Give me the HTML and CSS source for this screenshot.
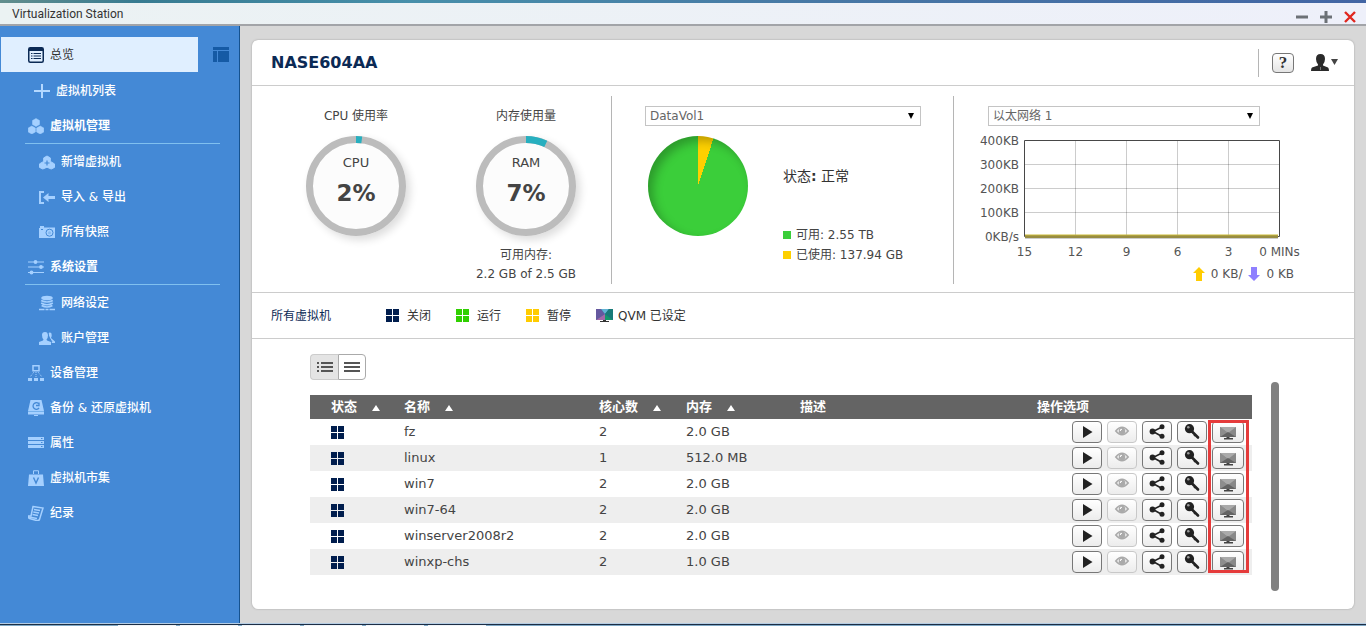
FILE: index.html
```html
<!DOCTYPE html>
<html lang="zh-CN">
<head>
<meta charset="utf-8">
<title>Virtualization Station</title>
<link rel="stylesheet" href="styles.css">
</head>
<body>
<svg class="sprite" aria-hidden="true">
  <symbol id="win" viewBox="0 0 13 13"><path d="M0 0h6v6H0zM7 0h6v6H7zM0 7h6v6H0zM7 7h6v6H7z" fill="currentColor"/></symbol>
  <symbol id="play" viewBox="0 0 16 16"><path d="M4 2l9.500 6L4 14z" fill="#222"/></symbol>
  <symbol id="eye" viewBox="0 0 16 16"><path d="M1.800 7Q8-.5 14.200 7 8 14.500 1.800 7z" fill="none" stroke="#aaa" stroke-width="1.600"/><circle cx="8" cy="7" r="3.300" fill="#aaa"/><path d="M6.300 7Q6.300 5.200 8 5.200" fill="none" stroke="#fff" stroke-width="1.100"/></symbol>
  <symbol id="share" viewBox="0 0 16 16"><path d="M13 3L4 7.500l9 5" fill="none" stroke="#222" stroke-width="1.600"/><circle cx="3.500" cy="7.500" r="2.900" fill="#222"/><circle cx="13" cy="2.700" r="2.500" fill="#222"/><circle cx="13" cy="12.300" r="2.500" fill="#222"/></symbol>
  <symbol id="key" viewBox="0 0 16 16"><path d="M7 6.500l7 7" stroke="#222" stroke-width="2.600" stroke-linecap="round"/><path d="M10 12l1.500-1.500" stroke="#222" stroke-width="1.500"/><circle cx="5.500" cy="4.700" r="4.600" fill="#222"/><circle cx="4.300" cy="3.200" r="1.300" fill="#999"/></symbol>
  <symbol id="screen" viewBox="0 0 16 16"><path d="M0 3h16v10H0z" fill="#888"/><path d="M0 3l8 6 8-6z" fill="#aaa"/><path d="M0 3l8 6-8 4z" fill="#8d8d8d"/><path d="M0 13l8-5 8 5z" fill="#636363"/><path d="M6.500 13h3v1H13v1.500H4V14h2.500z" fill="#444"/></symbol>
</svg>

<div class="desktop-top"></div>
<header class="titlebar">
  <span class="titlebar-name">Virtualization Station</span>
  <div class="window-tools">
    <button aria-label="最小化"><svg width="12" height="12"><path d="M0 6h12" stroke="#6c7176" stroke-width="3"/></svg></button>
    <button aria-label="最大化"><svg width="12" height="12"><path d="M0 6h12M6 0v12" stroke="#6c7176" stroke-width="3"/></svg></button>
    <button aria-label="关闭"><svg width="12" height="12"><path d="M1 1l10 10M11 1L1 11" stroke="#e0271f" stroke-width="2.400"/></svg></button>
  </div>
</header>

<div class="workspace">
  <aside class="sidebar">
    <button class="collapse" aria-label="收起菜单"><svg width="16" height="15"><path d="M0 0h16v3H0zM0 4h4v11H0zM5 4h11v11H5z" fill="#155aa5"/></svg></button>
    <nav>
      <a class="nav-item active" href="#"><svg width="16" height="16"><rect x=".75" y=".75" width="14.500" height="14.500" rx="1.500" fill="none" stroke="#0b2a55" stroke-width="1.500"/><path d="M1 1h14v3H1z" fill="#0b2a55"/><path d="M3 6.500h1.500M5.500 6.500h7.500M3 9h1.500M5.500 9h7.500M3 11.500h1.500M5.500 11.500h7.500" stroke="#0b2a55" stroke-width="1.200"/></svg>总览</a>
      <a class="nav-item plus" href="#"><svg width="16" height="16"><path d="M0 8h16M8 1v14" stroke="#b3d8ff" stroke-width="2"/></svg>虚拟机列表</a>
      <a class="nav-item section" href="#"><svg width="16" height="16"><path d="M8 .5l3.500 2v4L8 8.500l-3.500-2v-4zM3.800 8l3.600 2v4l-3.600 2-3.600-2v-4zM12.200 8l3.600 2v4l-3.600 2-3.600-2v-4z" fill="#a5d0ff" stroke="#a5d0ff" stroke-width=".5" stroke-linejoin="round"/></svg>虚拟机管理</a>
      <a class="nav-item sub" href="#"><svg width="16" height="16"><path d="M8 2l3.300 1.900v3.500l4.200 2.500v3.500L12.200 15 8 13.200 3.800 15 .5 13.400V9.900l4.200-2.500V3.900z" fill="#a5d0ff" stroke="#a5d0ff" stroke-linejoin="round"/><path d="M8 6.500v5M5.500 9h5" stroke="#4489d6" stroke-width="1.200"/></svg>新增虚拟机</a>
      <a class="nav-item sub" href="#"><svg width="16" height="16"><path d="M5 3H1v11h4" fill="none" stroke="#a5d0ff" stroke-width="2"/><path d="M4 8.500L9.500 4v3H16v3H9.500v3z" fill="#a5d0ff"/></svg>导入 &amp; 导出</a>
      <a class="nav-item sub" href="#"><svg width="16" height="16"><path d="M1 2h4v1.500h11V14H0V4h1z" fill="#a5d0ff"/><circle cx="10.500" cy="8.700" r="3.500" fill="none" stroke="#4489d6"/><circle cx="10.500" cy="8.700" r="1.500" fill="#85b9ef"/><path d="M2 5h2v1H2z" fill="#4489d6"/></svg>所有快照</a>
      <a class="nav-item section" href="#"><svg width="16" height="16"><path d="M0 3h16M0 8h16M0 13.500h16" stroke="#a5d0ff"/><circle cx="7.500" cy="3" r="1.900" fill="#a5d0ff"/><circle cx="13" cy="8" r="1.900" fill="#a5d0ff"/><circle cx="3.500" cy="13.500" r="1.900" fill="#a5d0ff"/></svg>系统设置</a>
      <a class="nav-item sub" href="#"><svg width="16" height="16"><ellipse cx="8" cy="3" rx="5.800" ry="2.300" fill="#a5d0ff"/><path d="M2.200 5.500q5.800 3 11.600 0M2.200 8q5.800 3.500 11.600 0M2.600 10.500q5.400 3 10.800 0" fill="none" stroke="#a5d0ff" stroke-width="1.700"/><path d="M0 14.500h5.500M10.500 14.500H16M6.500 14.500h3" stroke="#a5d0ff" stroke-width="1.500"/></svg>网络设定</a>
      <a class="nav-item sub" href="#"><svg width="16" height="16"><path d="M9 3.500q2-2 3.500 0 .7 3-.5 4.500l4 3.500v1.500h-3z" fill="#a5d0ff"/><path d="M3 5q0-3 3-3t3 3q0 3-1.500 4.500l.5 1 4 1.500V15H0v-3l4-1.500.5-1Q3 8 3 5z" fill="#a5d0ff"/><path d="M9 2l.8 5L13 12" fill="none" stroke="#4489d6"/></svg>账户管理</a>
      <a class="nav-item" href="#"><svg width="16" height="16"><path d="M5 .75h6v5H5z" fill="none" stroke="#a5d0ff" stroke-width="1.500"/><path d="M8 7v5M6 7l-4 5M10 7l4 5" stroke="#a5d0ff" stroke-dasharray="1 1"/><path d="M0 13h4v3H0zM6 13h4v3H6zM12 13h4v3h-4z" fill="#a5d0ff"/></svg>设备管理</a>
      <a class="nav-item" href="#"><svg width="16" height="16"><path d="M2.500 0h11L16 11v3.500H0V11z" fill="#a5d0ff"/><path d="M10.500 3.500A3.300 3.300 0 1 0 11 8M8 5.500h3V2.500" fill="none" stroke="#4489d6" stroke-width="1.300"/><path d="M0 11.500h16" stroke="#75b1ed"/><path d="M6 15h4v1H6z" fill="#a5d0ff"/></svg>备份 &amp; 还原虚拟机</a>
      <a class="nav-item" href="#"><svg width="16" height="16"><path d="M0 2h16v3H0zM0 6h16v3H0zM0 10h16v3H0z" fill="#a5d0ff"/><path d="M13 3.500h1.500M13 7.500h1.500M13 11.500h1.500" stroke="#4489d6"/></svg>属性</a>
      <a class="nav-item" href="#"><svg width="16" height="16"><path d="M5.500 4V.75h5V4" fill="none" stroke="#a5d0ff"/><path d="M1 4.500h14l1 11.500H0z" fill="#a5d0ff"/><path d="M5.500 7.500L8 13l2.500-5.500" fill="none" stroke="#4489d6" stroke-width="1.400"/></svg>虚拟机市集</a>
      <a class="nav-item" href="#"><svg width="16" height="16"><path d="M5 1.500l10 1.500-3.500 11.500q-1 1.500-3 1L1.500 13.500Q0 13 .5 11L3 11z" fill="none" stroke="#a5d0ff" stroke-width="1.500"/><path d="M6 4.500l6 1M5.300 7l5.700 1M4.500 9.500l5.500 1M1 12l8 1.500" stroke="#a5d0ff" stroke-width="1.400"/></svg>纪录</a>
    </nav>
  </aside>

  <main class="panel">
    <div class="panel-head">
      <h1>NASE604AA</h1>
      <div class="head-tools">
        <button class="help" aria-label="帮助">?</button>
        <button class="user" aria-label="用户"><svg width="28" height="18"><path d="M5 5q0-5 4.500-5T14 5q0 3-2 5.500v1l5 2q1 .5 1 3.500H0q0-3 1-3.500l6-2v-1Q5 8 5 5z" fill="#2a2a2a"/><path d="M9 13h1v3H9z" fill="#777"/><path d="M20 5h7l-3.500 6z" fill="#444"/></svg></button>
      </div>
    </div>

    <section class="stats">
      <div class="gauges">
        <div class="gauge">
          <span>CPU 使用率</span>
          <div class="ring"><svg viewBox="0 0 100 100"><circle cx="50" cy="50" r="46.500" class="track"/><circle cx="50" cy="50" r="46.500" pathLength="100" class="used cpu"/></svg><span>CPU</span><strong>2%</strong></div>
        </div>
        <div class="gauge">
          <span>内存使用量</span>
          <div class="ring"><svg viewBox="0 0 100 100"><circle cx="50" cy="50" r="46.500" class="track"/><circle cx="50" cy="50" r="46.500" pathLength="100" class="used ram"/></svg><span>RAM</span><strong>7%</strong></div>
          <div class="free">可用内存:<br>2.2 GB of 2.5 GB</div>
        </div>
      </div>

      <div class="disk">
        <div class="picker"><select aria-label="存储空间"><option>DataVol1</option></select><svg width="8" height="8"><path d="M1 1h6L4 7z"/></svg></div>
        <div class="disk-body">
          <div class="pie"></div>
          <div class="disk-info">
            <p class="health">状态<b>:</b> 正常</p>
            <ul>
              <li class="avail">可用: 2.55 TB</li>
              <li class="taken">已使用: 137.94 GB</li>
            </ul>
          </div>
        </div>
      </div>

      <div class="net">
        <div class="picker"><select aria-label="网络"><option>以太网络 1</option></select><svg width="8" height="8"><path d="M1 1h6L4 7z"/></svg></div>
        <div class="chart">
          <div class="y-axis"><span>400KB</span><span>300KB</span><span>200KB</span><span>100KB</span><span>0KB/s</span></div>
          <svg class="plot" width="256" height="100"><path d="M51.500 0v96M102.500 0v96M153.500 0v96M204.500 0v96M0 24.500h256M0 48.500h256M0 72.500h256" stroke="#000" stroke-opacity=".2"/><path d="M.5.5h255v96H.5z" fill="none" stroke="#484848"/><path d="M1 98.500h253" stroke="#ccc"/><path d="M1 96.500h253" stroke="#978c42" stroke-width="3"/><path d="M1 95h253" stroke="#c9b837"/></svg>
        </div>
        <div class="x-axis"><span>15</span><span>12</span><span>9</span><span>6</span><span>3</span><span>0 MINs</span></div>
        <div class="traffic"><svg width="12" height="14"><path d="M6 0l6 6H9v8H3V6H0z" fill="#fc0"/></svg><span>0 KB/</span><svg width="12" height="14"><path d="M6 14l6-6H9V0H3v8H0z" fill="#8f80ff"/></svg><span>0 KB</span></div>
      </div>
    </section>

    <div class="legend">
      <h2>所有虚拟机</h2>
      <span class="key-off"><svg class="win"><use href="#win"/></svg>关闭</span>
      <span class="key-on"><svg class="win"><use href="#win"/></svg>运行</span>
      <span class="key-pause"><svg class="win"><use href="#win"/></svg>暂停</span>
      <span class="key-qvm"><svg width="17" height="13"><path d="M0 0h17v11H0z" fill="#286b9c"/><path d="M0 0h5l4 5-9 6z" fill="#65589f"/><path d="M0 11l9-6v6z" fill="#a468a8"/><path d="M5 0h8L9 5z" fill="#62b4d4"/><path d="M17 11H9V5z" fill="#14986b"/><path d="M13 0h4v11L9 5z" fill="#187a78"/><path d="M7 11h3v1h3v1H4v-1h3z" fill="#333"/></svg>QVM 已设定</span>
    </div>

    <section class="list">
      <div class="list-main">
        <div class="view-toggle">
          <button class="on" aria-label="详细列表"><svg width="16" height="10"><path d="M0 1h2M4 1h12M0 5h2M4 5h12M0 9h2M4 9h12" stroke="#555" stroke-width="2"/></svg></button>
          <button aria-label="简单列表"><svg width="16" height="10"><path d="M0 1h16M0 5h16M0 9h16" stroke="#555" stroke-width="2"/></svg></button>
        </div>
        <div class="table-wrap">
          <table>
            <colgroup><col class="c-state"><col class="c-name"><col class="c-core"><col class="c-mem"><col><col class="c-act"></colgroup>
            <thead><tr><th class="state">状态<i class="sort"></i></th><th>名称<i class="sort"></i></th><th>核心数<i class="sort"></i></th><th>内存<i class="sort"></i></th><th>描述</th><th>操作选项</th></tr></thead>
            <tbody>
              <tr><td class="state"><svg class="win"><use href="#win"/></svg></td><td>fz</td><td>2</td><td>2.0 GB</td><td></td><td><div class="actions"><button aria-label="启动"><svg><use href="#play"/></svg></button><button aria-label="查看" disabled><svg><use href="#eye"/></svg></button><button aria-label="分享"><svg><use href="#share"/></svg></button><button aria-label="密钥"><svg><use href="#key"/></svg></button><button class="wide" aria-label="QVM"><svg><use href="#screen"/></svg></button></div></td></tr>
              <tr><td class="state"><svg class="win"><use href="#win"/></svg></td><td>linux</td><td>1</td><td>512.0 MB</td><td></td><td><div class="actions"><button aria-label="启动"><svg><use href="#play"/></svg></button><button aria-label="查看" disabled><svg><use href="#eye"/></svg></button><button aria-label="分享"><svg><use href="#share"/></svg></button><button aria-label="密钥"><svg><use href="#key"/></svg></button><button class="wide" aria-label="QVM"><svg><use href="#screen"/></svg></button></div></td></tr>
              <tr><td class="state"><svg class="win"><use href="#win"/></svg></td><td>win7</td><td>2</td><td>2.0 GB</td><td></td><td><div class="actions"><button aria-label="启动"><svg><use href="#play"/></svg></button><button aria-label="查看" disabled><svg><use href="#eye"/></svg></button><button aria-label="分享"><svg><use href="#share"/></svg></button><button aria-label="密钥"><svg><use href="#key"/></svg></button><button class="wide" aria-label="QVM"><svg><use href="#screen"/></svg></button></div></td></tr>
              <tr><td class="state"><svg class="win"><use href="#win"/></svg></td><td>win7-64</td><td>2</td><td>2.0 GB</td><td></td><td><div class="actions"><button aria-label="启动"><svg><use href="#play"/></svg></button><button aria-label="查看" disabled><svg><use href="#eye"/></svg></button><button aria-label="分享"><svg><use href="#share"/></svg></button><button aria-label="密钥"><svg><use href="#key"/></svg></button><button class="wide" aria-label="QVM"><svg><use href="#screen"/></svg></button></div></td></tr>
              <tr><td class="state"><svg class="win"><use href="#win"/></svg></td><td>winserver2008r2</td><td>2</td><td>2.0 GB</td><td></td><td><div class="actions"><button aria-label="启动"><svg><use href="#play"/></svg></button><button aria-label="查看" disabled><svg><use href="#eye"/></svg></button><button aria-label="分享"><svg><use href="#share"/></svg></button><button aria-label="密钥"><svg><use href="#key"/></svg></button><button class="wide" aria-label="QVM"><svg><use href="#screen"/></svg></button></div></td></tr>
              <tr><td class="state"><svg class="win"><use href="#win"/></svg></td><td>winxp-chs</td><td>2</td><td>1.0 GB</td><td></td><td><div class="actions"><button aria-label="启动"><svg><use href="#play"/></svg></button><button aria-label="查看" disabled><svg><use href="#eye"/></svg></button><button aria-label="分享"><svg><use href="#share"/></svg></button><button aria-label="密钥"><svg><use href="#key"/></svg></button><button class="wide" aria-label="QVM"><svg><use href="#screen"/></svg></button></div></td></tr>
            </tbody>
          </table>
          <div class="highlight"></div>
        </div>
      </div>
      <div class="scrollbar"></div>
    </section>
  </main>
</div>
<footer class="taskbar"><i></i><i></i><i></i><i></i><i></i><i></i></footer>
</body>
</html>
```

FILE: styles.css
```css
* { box-sizing: border-box; }
body {
  margin: 0;
  min-height: 100vh;
  display: flex;
  flex-direction: column;
  font: 12px/20px "DejaVu Sans", "Noto Sans CJK SC", sans-serif;
  color: #444;
}
button { font: inherit; padding: 0; border: 0; background: none; display: flex; align-items: center; justify-content: center; }
h1, h2, p, ul { margin: 0; padding: 0; }
svg { display: block; flex: none; }
.sprite { position: absolute; width: 0; height: 0; }

.desktop-top { height: 3px; background: linear-gradient(90deg, #628e8d, #377b91 10%, #478faa 30%, #4778a5 60%, #4265a4); }
.titlebar {
  height: 23px;
  display: flex;
  align-items: center;
  justify-content: space-between;
  padding: 0 10px 0 12px;
  border-bottom: 2px solid #a2a4a8;
  background: linear-gradient(90deg, #ebf2f3, #eef0fa);
}
.titlebar-name { font: 12px/20px Roboto, sans-serif; color: #333; }
.window-tools { display: flex; gap: 12px; padding-top: 6px; }

.workspace { flex: 1; display: flex; background: #d8d8d8; }

.sidebar { flex: none; width: 240px; padding-top: 11px; position: relative; background: #4489d6; border-right: 1px solid #15528f; }
.collapse { position: absolute; left: 213px; top: 21px; }
.nav-item {
  height: 35px;
  display: flex;
  align-items: center;
  gap: 6px;
  margin: 0 19px 0 25px;
  padding-left: 3px;
  color: #fff;
  font-weight: 500;
  text-decoration: none;
}
.nav-item.active { margin: 0 41px 1px 1px; padding-left: 27px; background: #e0efff; color: #333; font-weight: 400; }
.nav-item.plus { padding-left: 9px; }
.nav-item.sub { padding-left: 14px; }
.nav-item.section { height: 36px; border-bottom: 1px solid #80c0ef; font-weight: 700; }

.panel {
  flex: 1;
  min-width: 0;
  margin: 14px 12px;
  display: flex;
  flex-direction: column;
  background: #fff;
  border-radius: 6px;
  box-shadow: 0 0 2px #999;
}
.panel-head { height: 46px; display: flex; align-items: center; justify-content: space-between; padding: 0 15px 0 19px; border-bottom: 1px solid #ccc; }
h1 { font-size: 16px; line-height: 24px; color: #0b2a55; }
.head-tools { display: flex; align-items: center; height: 28px; padding-left: 13px; gap: 17px; border-left: 1px solid #b5b5b5; }
.help { width: 22px; height: 20px; border: 1px solid #777; border-radius: 4px; background: linear-gradient(#fff, #e4e4e4); font: 700 17px/18px "Liberation Serif", serif; color: #333; }

.stats { display: flex; padding: 10px 0 8px; border-bottom: 1px solid #ccc; }
.gauges { flex: none; display: flex; padding: 10px 0 0 19px; }
.gauge { width: 170px; display: flex; flex-direction: column; align-items: center; gap: 10px; }
.ring {
  width: 100px;
  height: 100px;
  display: grid;
  grid-template: 15px 24px 36px 1fr / 1fr;
  justify-items: center;
  align-items: center;
  border-radius: 50%;
  box-shadow: 4px 4px 8px #ddd;
  font-size: 13px;
}
.ring svg { grid-area: 1 / 1 / 5 / 2; width: 100px; height: 100px; transform: rotate(-90deg); }
.ring span { grid-area: 2 / 1; z-index: 1; }
.ring strong { grid-area: 3 / 1; z-index: 1; font-size: 23px; }
.track, .used { fill: none; stroke-width: 7; stroke: #bcbcbc; }
.track { fill: #fcfcfc; }
.used { stroke: #27afbf; }
.used.cpu { stroke-dasharray: 2 98; }
.used.ram { stroke-dasharray: 7 93; }
.free { text-align: center; line-height: 19px; }

.disk { flex: none; width: 343px; padding: 10px 32px 0 33px; border: solid #b5b5b5; border-width: 0 1px; }
.picker { display: grid; align-items: center; }
.picker > * { grid-area: 1 / 1; }
.picker svg { justify-self: end; margin-right: 6px; }
.picker select {
  appearance: none;
  width: 100%;
  height: 20px;
  padding: 0 4px;
  border: 1px solid #c4c4c4;
  border-radius: 0;
  background: #fff;
  font: 12px/18px "DejaVu Sans", "Noto Sans CJK SC", sans-serif;
  color: #666;
}
.disk-body { display: flex; gap: 35px; padding: 10px 0 0 3px; }
.pie {
  width: 100px;
  height: 100px;
  border-radius: 50%;
  background: conic-gradient(#fdd000 5%, #3bce3a 5%);
  box-shadow: inset 5px 5px 10px rgba(0, 0, 0, .25);
}
.disk-info { padding-top: 30px; }
.health { font-size: 14px; margin-bottom: 39px; color: #333; }
.disk-info ul { list-style: none; }
.disk-info li { display: flex; align-items: center; gap: 5px; white-space: nowrap; }
.disk-info li::before { content: ""; width: 8px; height: 8px; background: #3bce3a; }
.disk-info .taken::before { background: #fdd000; }

.net { width: 340px; padding: 10px 0 0 25px; color: #555; }
.net .picker { width: 272px; margin-left: 9px; }
.chart { display: flex; gap: 5px; height: 118px; }
.y-axis { width: 40px; display: flex; flex-direction: column; align-items: flex-end; padding-top: 3px; line-height: 24px; }
.plot { margin-top: 14px; }
.x-axis { display: flex; width: 306px; margin-left: 20px; line-height: 16px; }
.x-axis span { flex: 1; text-align: center; white-space: nowrap; }
.traffic { display: flex; align-items: center; justify-content: flex-end; gap: 6px; padding-top: 4px; }

.legend { height: 46px; display: flex; align-items: center; gap: 25px; padding: 0 19px; border-bottom: 1px solid #ccc; color: #333; }
.legend h2 { width: 90px; font-size: 12px; font-weight: 400; color: #0b2a55; }
.legend span { display: flex; align-items: center; gap: 8px; }
.win { width: 13px; height: 13px; color: #001d4d; }
.key-on .win { color: #30d000; }
.key-pause .win { color: #fc0; }
.legend .key-qvm { gap: 5px; }

.list { flex: 1; display: flex; gap: 19px; padding: 0 75px 18px 58px; }
.list-main { flex: 1; padding-top: 15px; }
.view-toggle { display: flex; margin-bottom: 15px; }
.view-toggle button { width: 28px; height: 26px; border: 1px solid #aaa; border-radius: 0 4px 4px 0; background: #fff; }
.view-toggle .on { border-color: #ccc; border-right: 0; border-radius: 4px 0 0 4px; background: #e4e4e4; }
.table-wrap { position: relative; }
table { width: 100%; table-layout: fixed; border-collapse: collapse; font-size: 13px; color: #444; }
.c-state { width: 94px; }
.c-name { width: 195px; }
.c-core { width: 87px; }
.c-mem { width: 114px; }
.c-act { width: 215px; }
th { height: 24px; padding: 0; background: #646464; color: #fff; text-align: left; font-weight: 700; }
td { height: 26px; padding: 0; }
.state { padding-left: 21px; }
tbody tr:nth-child(even) { background: #eee; }
.sort { display: inline-block; margin-left: 15px; border: solid transparent; border-width: 0 4px 6px; border-bottom-color: #fff; }
.actions { display: flex; justify-content: flex-end; gap: 5px; padding-right: 8px; }
.actions button { width: 30px; height: 22px; border: 1px solid #777; border-radius: 4px; background: linear-gradient(#fff, #ececec); }
.actions button:disabled { border-color: #c8c8c8; }
.actions .wide { width: 32px; }
.actions svg { width: 16px; height: 16px; }
.highlight { position: absolute; top: 25px; right: 3px; bottom: 2px; width: 41px; border: 3px solid #e53b3b; }
.scrollbar { width: 8px; margin-top: 43px; border-radius: 4px; background: #808080; }

.taskbar { height: 3px; display: flex; gap: 4px; padding: 2px 0 0 118px; background: linear-gradient(#b5cde4 1px, #1c2e45 1px, #1c2e45 2px, #7fa8c6 2px); }
.taskbar i { width: 58px; background: #f0f4f8; }
```
